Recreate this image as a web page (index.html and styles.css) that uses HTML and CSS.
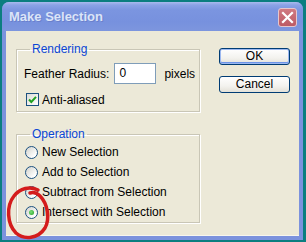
FILE: index.html
```html
<!DOCTYPE html>
<html>
<head>
<meta charset="utf-8">
<link rel="stylesheet" href="styles.css">
</head>
<body>
<div class="window">
  <div class="titlebar">
    <span class="title">Make Selection</span>
    <span class="close"><svg width="19" height="19" viewBox="0 0 19 19"><path d="M5 5 L14 14 M14 5 L5 14" stroke="#fff" stroke-width="2.2" stroke-linecap="square"/></svg></span>
  </div>
  <div class="client">
    <div class="groups">
      <fieldset class="group rendering">
        <legend>Rendering</legend>
        <div class="feather">
          <span class="label">Feather Radius:</span>
          <span class="input">0</span>
          <span class="label">pixels</span>
        </div>
        <div class="check-row">
          <span class="checkbox"><svg width="11" height="11" viewBox="0 0 11 11"><path d="M2 5.5 L4.3 8 L9 2.8" fill="none" stroke="#21a121" stroke-width="2"/></svg></span>
          <span>Anti-aliased</span>
        </div>
      </fieldset>
      <fieldset class="group operation">
        <legend>Operation</legend>
        <div class="radio-row"><span class="radio"></span><span>New Selection</span></div>
        <div class="radio-row"><span class="radio"></span><span>Add to Selection</span></div>
        <div class="radio-row"><span class="radio"></span><span>Subtract from Selection</span></div>
        <div class="radio-row"><span class="radio checked"></span><span>Intersect with Selection</span></div>
      </fieldset>
    </div>
    <div class="buttons">
      <div class="btn default">OK</div>
      <div class="btn">Cancel</div>
    </div>
  </div>
</div>
<svg class="markup" width="306" height="242" viewBox="0 0 306 242">
  <path d="M38 190 C 30 186, 20 188, 14 196 C 6 206, 7 224, 16 233 C 24 240, 38 239, 45 228 C 50 219, 48 204, 40 196 C 37 193, 33 192, 30 193" fill="none" stroke="#d41c1c" stroke-width="3.5" stroke-linecap="round"/>
</svg>
</body>
</html>
```
FILE: styles.css
```css
html, body {
  margin: 0;
  padding: 0;
}
body {
  width: 306px;
  height: 242px;
  background: #0b7e80;
  font-family: "Liberation Sans", Arial, sans-serif;
  font-size: 12px;
  color: #000;
  position: relative;
  overflow: hidden;
}
.window {
  margin: 2px 0 0 2px;
  width: 301px;
  height: 238px;
  box-sizing: border-box;
  border-radius: 7px 7px 0 0;
  background: #7b92dd;
  display: flex;
  flex-direction: column;
  overflow: hidden;
}
.titlebar {
  height: 29px;
  flex: none;
  display: flex;
  align-items: flex-start;
  justify-content: space-between;
  background: linear-gradient(#a9bbee 0px, #8aa2e6 3px, #7b95e0 8px, #7791de 20px, #7d96de 29px);
  padding: 0 6px 0 7px;
}
.title {
  margin-top: 7px;
  font-weight: bold;
  font-size: 13px;
  color: #dbe4f8;
  text-shadow: 1px 1px 0 #6a80cc;
}
.close {
  margin-top: 6px;
  width: 19px;
  height: 19px;
  box-sizing: border-box;
  border: 1px solid #e6c6cc;
  border-radius: 3px;
  background: linear-gradient(#d07a82, #bd5a64);
  display: flex;
}
.close svg {
  margin: -1px;
}
.client {
  flex: 1;
  margin: 0 4px 4px 4px;
  background: #ece9d8;
  display: flex;
  box-shadow: inset 0 -1px 0 #f8f6ee;
}
.groups {
  margin-left: 10px;
  padding-top: 10px;
  width: 184px;
  display: flex;
  flex-direction: column;
}
.group {
  margin: 0;
  padding: 0 0 0 7px;
  border: 1px solid #c9c6b6;
  box-shadow: 1px 1px 0 #fff, inset 1px 1px 0 #fff;
  min-width: 0;
}
.group legend {
  margin-left: 6px;
  padding: 0 2px;
  line-height: 16px;
  color: #0a46d5;
}
.rendering {
  padding-bottom: 5px;
}
.operation {
  margin-top: 14px;
  height: 97px;
  box-sizing: border-box;
}
.feather {
  margin-top: 6px;
  display: flex;
  align-items: center;
  height: 21px;
  white-space: nowrap;
}
.label {
  flex: none;
}
.input {
  flex: none;
  margin-left: 5px;
  margin-right: 8px;
  width: 42px;
  height: 21px;
  box-sizing: border-box;
  border: 1px solid #7f9db9;
  background: #fff;
  padding-left: 4px;
  line-height: 19px;
}
.check-row {
  margin-top: 9px;
  display: flex;
  align-items: center;
  gap: 3px;
  height: 13px;
}
.checkbox {
  margin-left: 2px;
  width: 13px;
  height: 13px;
  box-sizing: border-box;
  border: 1px solid #1c5180;
  background: linear-gradient(135deg, #dcdcd7, #fff);
  display: flex;
}
.radio-row {
  height: 20px;
  display: flex;
  align-items: center;
  gap: 4px;
  white-space: nowrap;
}
.radio {
  margin-left: 1px;
  width: 13px;
  height: 13px;
  box-sizing: border-box;
  border: 1px solid #1c5180;
  border-radius: 50%;
  background: linear-gradient(135deg, #d2d2cc, #fff 80%);
  display: flex;
  align-items: center;
  justify-content: center;
}
.radio.checked::after {
  content: "";
  width: 5px;
  height: 5px;
  border-radius: 50%;
  background: radial-gradient(circle at 40% 40%, #7be07b, #1f9d1f);
}
.buttons {
  margin-left: 19px;
  padding-top: 17px;
  display: flex;
  flex-direction: column;
  gap: 11px;
}
.btn {
  width: 71px;
  height: 17px;
  box-sizing: border-box;
  border: 1px solid #003c74;
  border-radius: 3px;
  background: linear-gradient(#fff, #f3f2ee 60%, #e3e1d8);
  text-align: center;
  line-height: 15px;
  font-size: 12px;
}
.btn.default {
  box-shadow: inset 0 0 0 1px #9cb8f0, inset 0 -1px 0 1px #6d94e8;
}
.markup {
  position: absolute;
  left: 0;
  top: 0;
  pointer-events: none;
}
```
